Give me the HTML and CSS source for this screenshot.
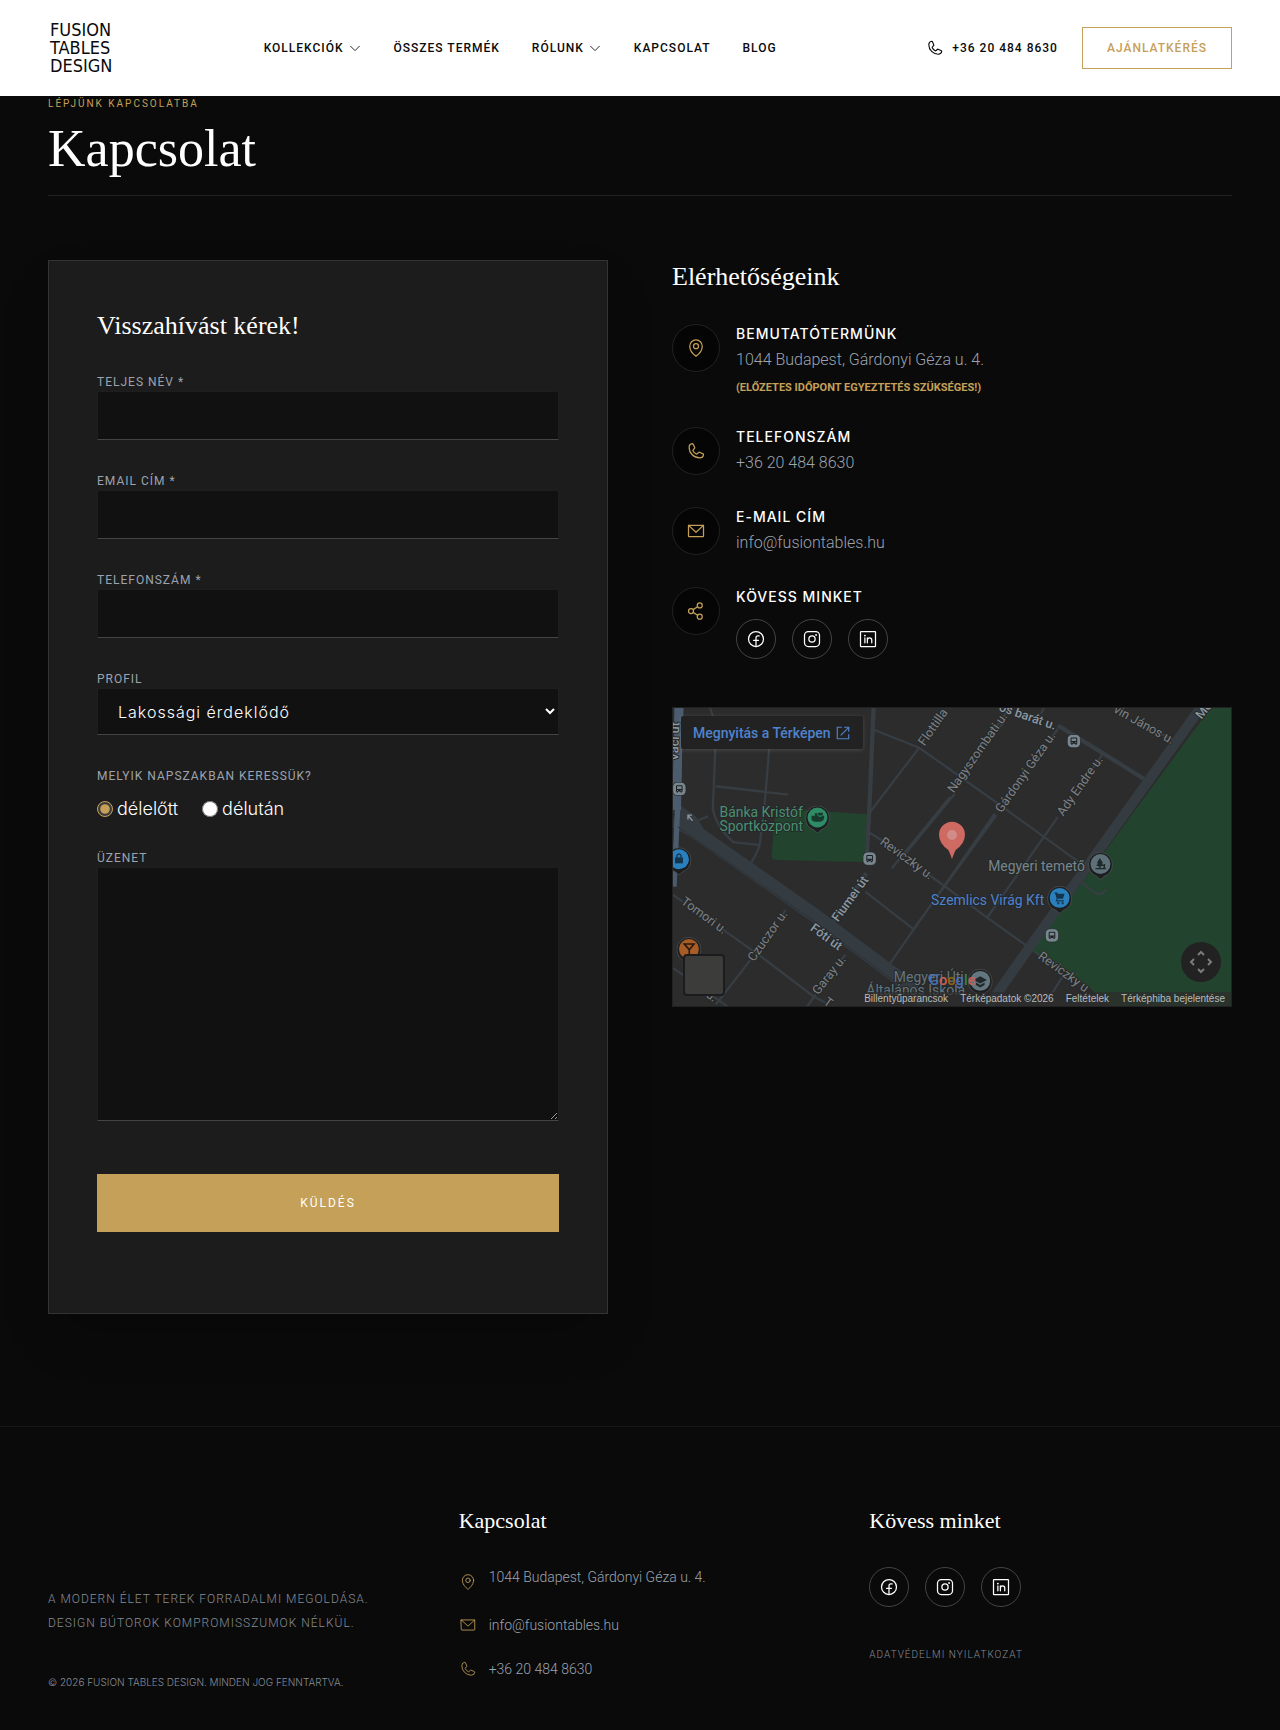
FILE: index.html
```html
<!DOCTYPE html>
<html lang="hu">
  <head>
    <meta charset="UTF-8" />
    <meta name="viewport" content="width=device-width, initial-scale=1.0" />
    <title>Kapcsolat - Fusion Tables Design</title>
    <link rel="stylesheet" href="styles.css">
  </head>
  <body>
    <svg class="sprite" aria-hidden="true">
      <symbol id="i-caret" viewBox="0 0 256 256"><polyline points="208 96 128 176 48 96" /></symbol>
      <symbol id="i-phone" viewBox="0 0 256 256"><path d="M164.4 145.3a8 8 0 0 1 7.6-.7l47.1 21.1a8 8 0 0 1 4.8 8.3A48.3 48.3 0 0 1 176 216 136 136 0 0 1 40 80 48.3 48.3 0 0 1 81.9 32.1a8 8 0 0 1 8.3 4.8l21.1 47.2a8 8 0 0 1-.6 7.5L89.3 117a7.9 7.9 0 0 0-.5 7.8c8.3 16.9 25.8 34.2 42.7 42.4a7.9 7.9 0 0 0 7.9-.6Z" /></symbol>
      <symbol id="i-pin" viewBox="0 0 256 256"><circle cx="128" cy="104" r="32" /><path d="M208 104c0 72-80 128-80 128S48 176 48 104a80 80 0 0 1 160 0Z" /></symbol>
      <symbol id="i-mail" viewBox="0 0 256 256"><path d="M32 56H224V192a8 8 0 0 1-8 8H40a8 8 0 0 1-8-8Z" /><polyline points="224 56 128 144 32 56" /></symbol>
      <symbol id="i-share" viewBox="0 0 256 256"><circle cx="64" cy="128" r="32" /><circle cx="176" cy="200" r="32" /><circle cx="176" cy="56" r="32" /><path d="M149 73.3 91 110.7M91 145.3l58 37.4" /></symbol>
      <symbol id="i-facebook" viewBox="0 0 256 256"><circle cx="128" cy="128" r="96" /><path d="M168 88h-16a24 24 0 0 0-24 24v112M96 144h64" /></symbol>
      <symbol id="i-instagram" viewBox="0 0 256 256"><rect x="32" y="32" width="192" height="192" rx="48" /><circle cx="128" cy="128" r="40" /><circle class="dot" cx="180" cy="76" r="12" /></symbol>
      <symbol id="i-linkedin" viewBox="0 0 256 256"><rect x="32" y="32" width="192" height="192" rx="8" /><path d="M88 112v64M120 112v64M120 140a28 28 0 0 1 56 0v36" /><circle class="dot" cx="88" cy="84" r="12" /></symbol>
      <symbol id="m-bus" viewBox="0 0 42 42">
        <rect x="1" y="1" width="40" height="40" rx="14" fill="#78868f" stroke="#1c1e20" stroke-width="2" />
        <path fill="#1d2022" d="M11 13q0-3 3-3h14q3 0 3 3v16h-2v3h-4v-3h-8v3h-4v-3h-2z" />
        <path fill="#78868f" d="M14 13h14v8H14zM14 24h3v3h-3zM25 24h3v3h-3z" />
      </symbol>
      <symbol id="m-place" viewBox="0 0 76 84">
        <path fill="#1c1e20" stroke="#54595c" stroke-width="2" d="M38 82Q34 82 28 74 2 64 2 37a36 36 0 0 1 72 0Q74 64 48 74q-6 8-10 8z" />
        <circle cx="38" cy="36" r="30" fill="currentColor" />
      </symbol>
    </svg>

    <header class="header">
      <div class="container header-inner">
        <a class="logo" href="#">
          <span>FUSION</span>
          <span>TABLES</span>
          <span>DESIGN</span>
        </a>
        <nav class="nav">
          <a href="#">Kollekciók <svg class="icon icon-caret"><use href="#i-caret" /></svg></a>
          <a href="#">Összes termék</a>
          <a href="#">Rólunk <svg class="icon icon-caret"><use href="#i-caret" /></svg></a>
          <a href="#">Kapcsolat</a>
          <a href="#">Blog</a>
        </nav>
        <div class="header-right">
          <a class="header-phone" href="tel:+36204848630"><svg class="icon icon-md"><use href="#i-phone" /></svg>+36 20 484 8630</a>
          <a class="quote-button" href="#">Ajánlatkérés</a>
        </div>
      </div>
    </header>

    <main class="container main">
      <div class="page-title">
        <p class="eyebrow">Lépjünk kapcsolatba</p>
        <h1>Kapcsolat</h1>
      </div>

      <div class="contact-grid">
        <form class="form-card">
          <h2>Visszahívást kérek!</h2>

          <div class="field">
            <label for="name">Teljes név *</label>
            <input type="text" id="name" name="name" required />
          </div>
          <div class="field">
            <label for="email">Email cím *</label>
            <input type="email" id="email" name="email" required />
          </div>
          <div class="field">
            <label for="phone">Telefonszám *</label>
            <input type="tel" id="phone" name="phone" required />
          </div>
          <div class="field">
            <label for="profile">Profil</label>
            <select id="profile" name="profile">
              <option>Lakossági érdeklődő</option>
            </select>
          </div>
          <fieldset class="radio-field">
            <legend>Melyik napszakban keressük?</legend>
            <div class="radio-row">
              <label><input type="radio" name="daytime" value="am" checked />délelőtt</label>
              <label><input type="radio" name="daytime" value="pm" />délután</label>
            </div>
          </fieldset>
          <div class="field">
            <label for="message">Üzenet</label>
            <textarea id="message" name="message"></textarea>
          </div>
          <button class="submit-button" type="submit">Küldés</button>
        </form>

        <section class="info">
          <h2>Elérhetőségeink</h2>
          <ul class="info-list">
            <li>
              <span class="badge"><svg class="icon icon-lg"><use href="#i-pin" /></svg></span>
              <div>
                <h3>Bemutatótermünk</h3>
                <p>1044 Budapest, Gárdonyi Géza u. 4.</p>
                <p class="note">(Előzetes időpont egyeztetés szükséges!)</p>
              </div>
            </li>
            <li>
              <span class="badge"><svg class="icon icon-lg"><use href="#i-phone" /></svg></span>
              <div>
                <h3>Telefonszám</h3>
                <p><a href="tel:+36204848630">+36 20 484 8630</a></p>
              </div>
            </li>
            <li>
              <span class="badge"><svg class="icon icon-lg"><use href="#i-mail" /></svg></span>
              <div>
                <h3>E-mail cím</h3>
                <p><a href="mailto:info@fusiontables.hu">info@fusiontables.hu</a></p>
              </div>
            </li>
            <li>
              <span class="badge"><svg class="icon icon-lg"><use href="#i-share" /></svg></span>
              <div>
                <h3>Kövess minket</h3>
                <div class="socials">
                  <a href="#" aria-label="Facebook"><svg class="icon icon-lg"><use href="#i-facebook" /></svg></a>
                  <a href="#" aria-label="Instagram"><svg class="icon icon-lg"><use href="#i-instagram" /></svg></a>
                  <a href="#" aria-label="LinkedIn"><svg class="icon icon-lg"><use href="#i-linkedin" /></svg></a>
                </div>
              </div>
            </li>
          </ul>

          <div class="map">
            <svg class="map-canvas" viewBox="21 21 1680 900" preserveAspectRatio="xMidYMid slice">
              <!-- parks -->
              <g fill="#22442e">
                <path d="M345 325 606 342 596 486 332 480Q318 478 318 464L328 350Z" />
                <path d="M1640 21H1701V921H1340L1270 860 1100 755Z" />
              </g>
              <!-- side streets -->
              <g class="road">
                <path d="M132 21Q150 60 149 130L141 325Q150 380 203 426L282 435M149 258 368 283M311 140 298 300 282 435Q270 470 248 500" />
                <path d="M626 88 762 142 870 218 1020 325 1140 412 1245 488M762 142 615 335M612 397 680 440M785 520 840 560 965 652 1095 745" />
                <path d="M1025 35 990 85M855 290 680 505M1020 60 1005 80M870 280 722 460M990 340 665 805M1180 85 1155 120M995 345 745 688M1315 160 1285 205M1180 350 968 652M600 575 745 688" />
                <path d="M1480 95 1540 125M21 585 50 605M165 685 285 770 440 888 480 910M360 630 340 660M255 780 150 915M540 765 520 790M450 885 425 921M21 805 185 921" />
                <path d="M1110 755 1140 780M1195 830 1160 885M1250 548 1295 580Q1310 588 1325 568M95 362 127 348M1140 15 1125 50" />
              </g>
              <path class="road road-mid" d="M625 21 612 330 603 490M1180 75 1315 158 1450 243M603 520 495 680" />
              <path class="road road-main" d="M1610 21 1100 735 1005 870 970 921M30 325 80 360 110 410" />
              <path class="road road-wide" d="M21 360Q60 375 110 410L450 648 700 835 790 921" />
              <path d="M45 21 36 300 24 560" fill="none" stroke="#4a5c6e" stroke-width="16" />
              <path d="M38 21 32 330" fill="none" stroke="#4a5c6e" stroke-width="26" />
              <path d="M35 380 440 660 700 855" fill="none" stroke="#2b3135" stroke-width="3" />
              <path d="M80 362 66 346M66 358V345H78" fill="none" stroke="#8b96a0" stroke-width="4" />

              <g class="street">
                <text transform="translate(778 138) rotate(-55)">Flottilla u.</text>
                <text transform="translate(866 280) rotate(-55)">Nagyszombati u.</text>
                <text transform="translate(1010 340) rotate(-55)">Gárdonyi Géza u.</text>
                <text transform="translate(1196 350) rotate(-55)">Ady Endre u.</text>
                <text transform="translate(642 430) rotate(36)">Reviczky u.</text>
                <text transform="translate(1118 775) rotate(36)">Reviczky u.</text>
                <text transform="translate(43 610) rotate(36)">Tomori u.</text>
                <text transform="translate(265 788) rotate(-55)">Czuczor u.</text>
                <text transform="translate(458 888) rotate(-52)">Garay u.</text>
                <text transform="translate(472 912) rotate(36)">T.</text>
                <text transform="translate(1345 34) rotate(29)">vin János u.</text>
                <text transform="translate(118 890) rotate(36)">u.</text>
              </g>
              <g class="street street-main">
                <text transform="translate(1000 30) rotate(19)">os barát u.</text>
                <text transform="translate(518 668) rotate(-54)">Fiumei út</text>
                <text transform="translate(432 690) rotate(36)">Fóti út</text>
                <text transform="translate(1612 58) rotate(-52)">Megyeri</text>
                <text transform="translate(36 182) rotate(-88)">Váci út</text>
              </g>

              <g class="place">
                <text x="161" y="351" fill="#4a8f72">Bánka Kristóf</text>
                <text x="161" y="394" fill="#4a8f72">Sportközpont</text>
                <text x="970" y="514" fill="#76868b">Megyeri temető</text>
                <text x="798" y="616" fill="#4f83cc">Szemlics Virág Kft</text>
                <text x="686" y="847" fill="#64767e">Megyeri Úti</text>
                <text x="603" y="886" fill="#64767e">Általános Iskola</text>
              </g>

              <use href="#m-place" x="418" y="316" width="76" height="84" color="#2f8a66" />
              <path fill="#173a2d" d="M438 347h10v-8h8v8q8 6 16 0h4v8q-4 10-14 10h-14q-10-2-10-10zM458 338h14v8h-14z" />
              <use href="#m-place" x="1270" y="456" width="76" height="84" color="#5d6f77" />
              <path fill="#20282b" d="M1306 474 1316 490H1312L1318 498H1309V503H1303V498H1295L1301 490H1297ZM1293 504H1324V508H1293ZM1317 492h5v12h-5z" />
              <use href="#m-place" x="1147" y="558" width="76" height="84" color="#2a80bd" />
              <path fill="#14344c" d="M1170 578h8l2 4h20l-5 15h-16l-1 4h20v4h-25l3-9-4-14h-2zM1178 607h6v6h-6zM1191 607h6v6h-6z" />
              <use href="#m-place" x="1" y="442" width="76" height="84" color="#2a80bd" />
              <path fill="#14344c" d="M27 472h24v18H27z" />
              <path fill="none" stroke="#14344c" stroke-width="4" d="M33 472v-6q6-8 12 0v6" />
              <use href="#m-place" x="31" y="712" width="76" height="84" color="#a85c26" />
              <path fill="none" stroke="#2b1a10" stroke-width="5" d="M55 733H84L70 750ZM70 748V770" />
              <use href="#m-place" x="908" y="808" width="76" height="84" color="#64767e" />
              <path fill="#20282b" d="M946 830 966 841 946 852 926 841ZM933 849 946 856 959 849V856L946 864 933 856Z" />

              <use href="#m-bus" x="19" y="245" width="42" height="42" />
              <use href="#m-bus" x="592" y="455" width="42" height="42" />
              <use href="#m-bus" x="1207" y="101" width="42" height="42" />
              <use href="#m-bus" x="1141" y="686" width="42" height="42" />

              <path fill="#cf6a63" d="M861 477Q856 462 850 450 822 430 822 404a39 39 0 0 1 78 0Q900 430 872 450 866 462 861 477Z" />
              <circle cx="861" cy="405" r="15" fill="#d28c88" />
              <text class="google" x="792" y="856"><tspan fill="#4770b8">G</tspan><tspan fill="#c8605a">o</tspan><tspan fill="#8f6516">o</tspan><tspan fill="#4770b8">g</tspan><tspan fill="#38814a">l</tspan><tspan fill="#c8605a">e</tspan></text>
            </svg>
            <a class="map-open" href="#">Megnyitás a Térképen
              <svg viewBox="0 0 14 14"><path d="M6 2H2V12H12V8M8 2H12V6M12 2 5 9" /></svg>
            </a>
            <button class="map-layer" type="button" aria-label="Műholdas nézet"></button>
            <button class="map-pan" type="button" aria-label="Mozgatás">
              <svg viewBox="0 0 24 24"><path d="m9 5 3-3 3 3M9 19l3 3 3-3M5 9l-3 3 3 3M19 9l3 3-3 3" /></svg>
            </button>
            <div class="map-credits">
              <a href="#">Billentyűparancsok</a>
              <span>Térképadatok ©2026</span>
              <a href="#">Feltételek</a>
              <a href="#">Térképhiba bejelentése</a>
            </div>
          </div>
        </section>
      </div>
    </main>

    <footer class="footer">
      <div class="container footer-grid">
        <div class="footer-about">
          <p>A modern élet terek forradalmi megoldása.<br />Design bútorok kompromisszumok nélkül.</p>
          <small>© 2026 Fusion Tables Design. Minden jog fenntartva.</small>
        </div>
        <div>
          <h4>Kapcsolat</h4>
          <ul class="footer-list">
            <li class="address"><svg class="icon icon-md"><use href="#i-pin" /></svg>1044 Budapest, Gárdonyi Géza u. 4.</li>
            <li><svg class="icon icon-md"><use href="#i-mail" /></svg><a href="mailto:info@fusiontables.hu">info@fusiontables.hu</a></li>
            <li><svg class="icon icon-md"><use href="#i-phone" /></svg><a href="tel:+36204848630">+36 20 484 8630</a></li>
          </ul>
        </div>
        <div>
          <h4>Kövess minket</h4>
          <div class="socials">
            <a href="#" aria-label="Facebook"><svg class="icon icon-lg"><use href="#i-facebook" /></svg></a>
            <a href="#" aria-label="Instagram"><svg class="icon icon-lg"><use href="#i-instagram" /></svg></a>
            <a href="#" aria-label="LinkedIn"><svg class="icon icon-lg"><use href="#i-linkedin" /></svg></a>
          </div>
          <a class="privacy" href="#">Adatvédelmi nyilatkozat</a>
        </div>
      </div>
    </footer>
  </body>
</html>
```
FILE: styles.css
```css
* {
  box-sizing: border-box;
}
body {
  margin: 0;
  background-color: #0a0a0a;
  color: #fff;
  font-family: Roboto, "Open Sans", sans-serif;
  font-weight: 300;
}
h1,
h2,
h3,
h4,
p,
ul {
  margin: 0;
  padding: 0;
}
h1,
h2,
h4 {
  color: #fff;
  font-family: "Liberation Serif", serif;
  font-weight: 400;
}
h2 {
  margin-bottom: 30px;
  font-size: 26px;
  line-height: 34px;
}
ul {
  list-style: none;
}
a {
  color: inherit;
  text-decoration: none;
}
.sprite {
  display: none;
}
.container {
  padding: 0 48px;
}
.icon {
  flex: none;
  fill: none;
  stroke: currentColor;
  stroke-width: 16;
  stroke-linecap: round;
  stroke-linejoin: round;
}
.icon-caret {
  width: 14px;
  height: 14px;
}
.icon-md {
  width: 18px;
  height: 18px;
}
.icon-lg {
  width: 20px;
  height: 20px;
}
.dot {
  fill: currentColor;
  stroke: none;
}

/* header */
.header {
  background: #fff;
  color: #0a0a0a;
  font-size: 12px;
  font-weight: 500;
  line-height: 16px;
  letter-spacing: 1px;
  text-transform: uppercase;
}
.header-inner {
  display: flex;
  align-items: center;
  justify-content: space-between;
  height: 96px;
}
.logo {
  display: flex;
  flex-direction: column;
  width: 66px;
  padding-left: 2px;
  font-family: "DejaVu Sans Condensed", sans-serif;
  font-size: 18px;
  font-weight: 400;
  line-height: 18px;
  letter-spacing: 0;
}
.nav,
.nav a,
.header-right,
.header-phone {
  display: flex;
  align-items: center;
}
.nav {
  gap: 32px;
}
.nav a {
  gap: 4px;
}
.header-right {
  gap: 24px;
}
.header-phone {
  gap: 8px;
}
.quote-button {
  padding: 0 24px;
  border: 1px solid #c5a059;
  color: #c5a059;
  line-height: 40px;
}

/* page title */
.main {
  padding-bottom: 112px;
}
.page-title {
  padding-bottom: 16px;
  margin-bottom: 64px;
  border-bottom: 1px solid #222;
}
.eyebrow {
  margin-bottom: 8px;
  color: #c5a059;
  font-size: 10px;
  font-weight: 400;
  line-height: 15px;
  letter-spacing: 2px;
  text-transform: uppercase;
}
h1 {
  font-size: 52px;
  line-height: 60px;
}
.contact-grid {
  display: grid;
  grid-template-columns: 1fr 1fr;
  gap: 64px;
  align-items: start;
}

/* form */
.form-card {
  padding: 48px 48px 81px;
  border: 1px solid #333;
  background: #1c1c1c;
  box-shadow: 0 25px 50px -12px rgba(0, 0, 0, 0.25);
}
.field {
  margin-bottom: 32px;
}
.field label,
.radio-field legend {
  display: block;
  padding: 0;
  color: #9ca3af;
  font-size: 12px;
  font-weight: 400;
  line-height: 18px;
  letter-spacing: 1px;
  text-transform: uppercase;
}
.field input,
.field select,
.field textarea {
  display: block;
  width: 100%;
  height: 49px;
  padding: 0 20px;
  border: 1px solid #1e1e1e;
  border-bottom-color: #444;
  border-radius: 0;
  background: #111;
  color: #fff;
  font-family: Inter, sans-serif;
  font-size: 16px;
  font-weight: 300;
  letter-spacing: 1px;
}
.field select {
  height: 47px;
  padding: 0 0 0 16px;
}
.field textarea {
  height: 254px;
  padding: 16px 20px;
  resize: vertical;
}
.radio-field {
  margin: 0 0 28px;
  padding: 0;
  border: 0;
}
.radio-row {
  display: flex;
  gap: 24px;
  padding-top: 12px;
}
.radio-row label {
  display: flex;
  align-items: center;
  gap: 4px;
  font-family: Inter, sans-serif;
  font-size: 18px;
  line-height: 24px;
}
.radio-row input {
  width: 16px;
  height: 16px;
  margin: 0;
  accent-color: #c5a059;
}
.submit-button {
  display: block;
  width: 100%;
  height: 58px;
  margin-top: 53px;
  border: 0;
  background: #c5a059;
  color: #fff;
  font-family: inherit;
  font-size: 12px;
  font-weight: 400;
  letter-spacing: 2px;
  text-transform: uppercase;
  cursor: pointer;
}

/* contact info */
.info-list {
  display: flex;
  flex-direction: column;
  gap: 32px;
  margin-bottom: 48px;
}
.info-list li {
  display: flex;
  gap: 16px;
  color: #9ca3af;
  font-size: 16px;
  line-height: 24px;
}
.badge,
.socials a {
  display: flex;
  flex: none;
  align-items: center;
  justify-content: center;
  border-radius: 50%;
}
.badge {
  width: 48px;
  height: 48px;
  border: 1px solid #222;
  background: #050505;
  color: #c5a059;
}
.info-list h3 {
  margin-bottom: 4px;
  color: #fff;
  font-family: Inter, sans-serif;
  font-size: 14px;
  font-weight: 500;
  line-height: 20px;
  letter-spacing: 1px;
  text-transform: uppercase;
}
.info-list .note {
  margin-top: 8px;
  color: #c5a059;
  font-size: 11px;
  font-weight: 700;
  line-height: 15px;
  text-transform: uppercase;
}
.socials {
  display: flex;
  gap: 16px;
}
.info-list .socials {
  padding-top: 8px;
}
.socials a {
  width: 40px;
  height: 40px;
  border: 1px solid #444;
  color: #fff;
}

/* map */
.map {
  position: relative;
  height: 300px;
  overflow: hidden;
  border: 1px solid #222;
  background: #2c2c2c;
}
.map-canvas {
  display: block;
  width: 100%;
  height: 100%;
}
.road {
  fill: none;
  stroke: #363d43;
  stroke-width: 7;
}
.road-mid {
  stroke-width: 13;
}
.road-main {
  stroke: #353c41;
  stroke-width: 30;
}
.road-wide {
  stroke: #353c41;
  stroke-width: 42;
}
.street,
.place {
  paint-order: stroke;
  stroke: #26282a;
  stroke-width: 6;
}
.street {
  fill: #7d8184;
  font-size: 38px;
  font-weight: 400;
}
.street-main {
  fill: #8b98a2;
  font-weight: 500;
}
.place {
  font-size: 42px;
  font-weight: 400;
}
.google {
  font-size: 44px;
  font-weight: 500;
}
.map-open {
  position: absolute;
  top: 8px;
  left: 8px;
  display: flex;
  align-items: center;
  gap: 4px;
  height: 33px;
  padding: 0 12px;
  border-radius: 2px;
  background: #222;
  box-shadow: 0 1px 4px rgba(255, 255, 255, 0.15);
  color: #4f83cc;
  font-size: 14px;
  font-weight: 500;
}
.map-open svg {
  width: 16px;
  height: 16px;
  fill: none;
  stroke: currentColor;
}
.map-layer {
  position: absolute;
  bottom: 10px;
  left: 10px;
  width: 42px;
  height: 42px;
  border: 2px solid #1c1c1c;
  border-radius: 4px;
  background: #3c3c3b;
}
.map-pan {
  position: absolute;
  right: 10px;
  bottom: 24px;
  display: flex;
  align-items: center;
  justify-content: center;
  width: 40px;
  height: 40px;
  padding: 0;
  border: 0;
  border-radius: 50%;
  background: #222;
}
.map-pan svg {
  width: 24px;
  height: 24px;
  fill: none;
  stroke: #7c7c7c;
  stroke-width: 2;
}
.map-credits {
  position: absolute;
  right: 0;
  bottom: 0;
  display: flex;
  gap: 12px;
  padding: 0 6px;
  background: rgba(44, 44, 44, 0.7);
  color: #bbb;
  font-family: "Liberation Sans", sans-serif;
  font-size: 10px;
  font-weight: 400;
  line-height: 14px;
}

/* footer */
.footer {
  padding: 80px 0 40px;
  border-top: 1px solid #161616;
  color: #9ca3af;
}
.footer-grid {
  display: grid;
  grid-template-columns: repeat(3, 1fr);
  gap: 48px;
}
.footer-about {
  padding-top: 80px;
  color: #868c96;
  text-transform: uppercase;
}
.footer-about p {
  margin-bottom: 40px;
  font-size: 12px;
  line-height: 24px;
  letter-spacing: 1px;
}
.footer-about small {
  display: block;
  font-family: Inter, sans-serif;
  font-size: 10px;
  line-height: 15px;
}
.footer h4 {
  margin-bottom: 32px;
  font-size: 22px;
  line-height: 28px;
}
.footer-list {
  display: flex;
  flex-direction: column;
  gap: 24px;
}
.footer-list li {
  display: flex;
  align-items: center;
  gap: 12px;
  font-size: 14px;
  line-height: 20px;
}
.footer-list .address {
  align-items: flex-start;
}
.address .icon {
  margin-top: 6px;
}
.footer-list .icon {
  color: #c5a059;
  stroke-width: 12;
}
.privacy {
  display: block;
  margin-top: 40px;
  color: #868c96;
  font-size: 10px;
  line-height: 15px;
  letter-spacing: 1px;
  text-transform: uppercase;
}

@media (max-width: 900px) {
  .header-inner {
    flex-wrap: wrap;
    height: auto;
    gap: 16px;
    padding: 16px 24px;
  }
  .nav {
    flex-wrap: wrap;
  }
  .contact-grid,
  .footer-grid {
    grid-template-columns: 1fr;
  }
}
```
